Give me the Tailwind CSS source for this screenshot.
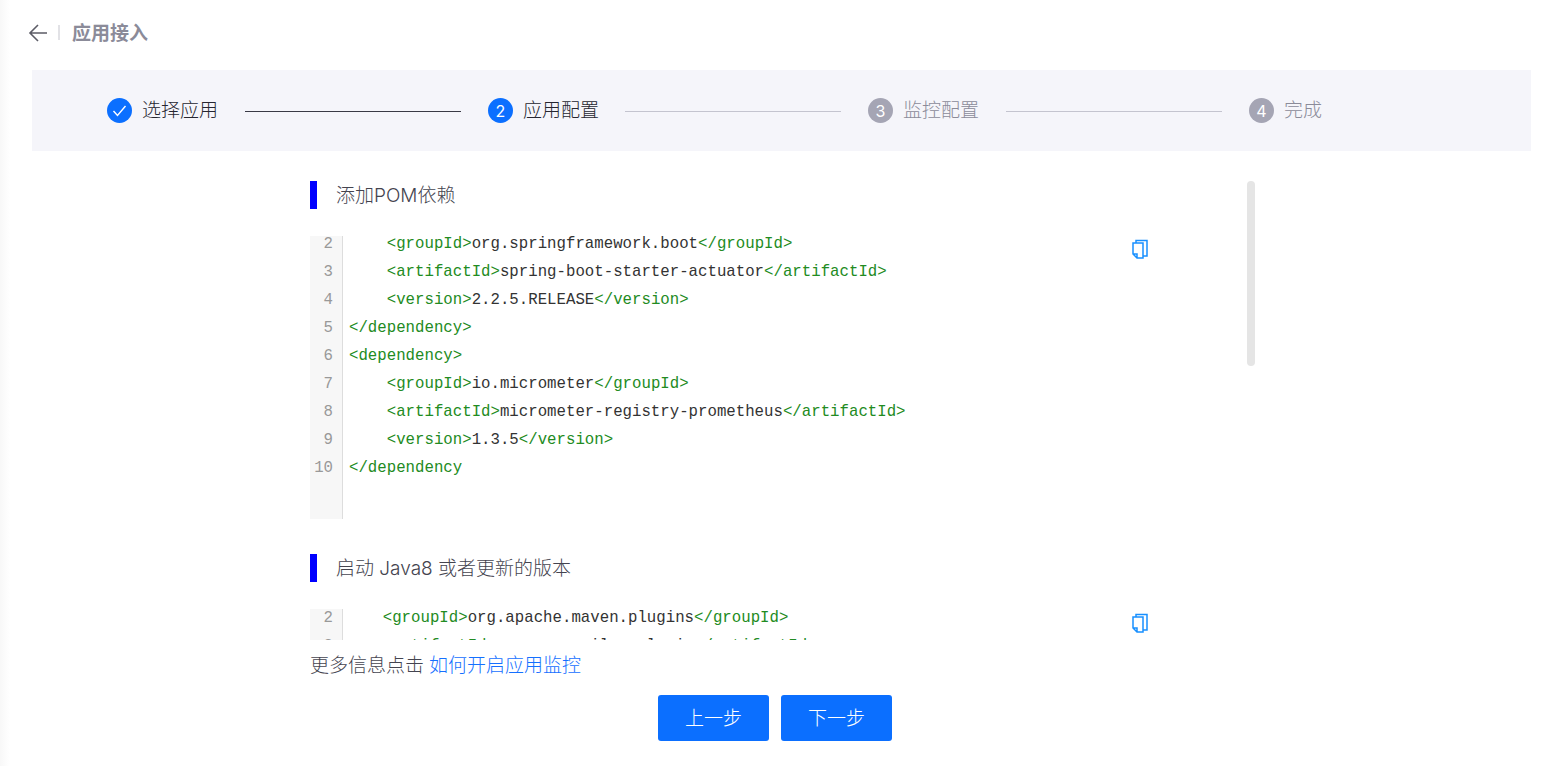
<!doctype html>
<html lang="zh">
<head>
  <meta charset="utf-8">
  <title>应用接入</title>
  <script src="https://cdn.jsdelivr.net/npm/@tailwindcss/browser@4"></script>
</head>
<body class="bg-white overflow-hidden">
<div class="relative w-[1558px] h-[766px] overflow-hidden font-['Inter','Noto_Sans_CJK_SC',sans-serif] text-[19px] text-[#44444f]">
  <div class="absolute left-0 top-0 h-full w-[10px] bg-linear-to-r from-[#f8f8f8] to-white"></div>

  <!-- header -->
  <div class="h-[70px] pl-[28px] pb-[5px] flex items-center">
    <svg class="w-[20px] h-[20px]" viewBox="0 0 20 20" fill="none" stroke="#5c5c66" stroke-width="1.6">
      <path d="M19 10H2M10 2L2 10l8 8"/>
    </svg>
    <div class="ml-[10px] w-[2px] h-[15px] bg-[#e2e2e6]"></div>
    <div class="ml-[12px] mt-[2px] font-bold text-[#8b8b99] leading-none">应用接入</div>
  </div>

  <!-- steps -->
  <div class="ml-[32px] w-[1499px] h-[81px] bg-[#f5f5fa] pl-[75px] flex items-center">
    <div class="w-[25px] h-[25px] rounded-full bg-[#0b6fff] flex items-center justify-center">
      <svg class="w-[15px] h-[15px]" viewBox="0 0 15 15" fill="none" stroke="#fff" stroke-width="1.4"><path d="M1.5 8l4 4.5L13.5 3"/></svg>
    </div>
    <span class="ml-[10px] w-[76px] pt-[2px] text-[#262630] whitespace-nowrap font-light">选择应用</span>
    <div class="ml-[27px] mr-[27px] mt-px w-[216px] h-px bg-[#3a3a45]"></div>
    <div class="w-[25px] h-[25px] rounded-full bg-[#0b6fff] text-white text-[16px] flex items-center justify-center">2</div>
    <span class="ml-[10px] w-[76px] pt-[2px] text-[#262630] whitespace-nowrap font-light">应用配置</span>
    <div class="ml-[26px] mr-[27px] mt-px w-[216px] h-px bg-[#c4c4cf]"></div>
    <div class="w-[25px] h-[25px] rounded-full bg-[#a5a5b4] text-white text-[16px] flex items-center justify-center">3</div>
    <span class="ml-[10px] w-[76px] pt-[2px] text-[#8b8b99] whitespace-nowrap font-light">监控配置</span>
    <div class="ml-[27px] mr-[27px] mt-px w-[216px] h-px bg-[#c4c4cf]"></div>
    <div class="w-[25px] h-[25px] rounded-full bg-[#a5a5b4] text-white text-[16px] flex items-center justify-center">4</div>
    <span class="ml-[10px] pt-[2px] text-[#8b8b99] whitespace-nowrap font-light">完成</span>
  </div>

  <!-- scroll area -->
  <div class="relative ml-[310px] w-[945px] h-[489px] overflow-hidden pt-[30px]">
    <div class="absolute right-0 top-[30px] w-[8px] h-[185px] rounded-full bg-[#e5e5e5]"></div>

    <div class="h-[28px] flex items-center">
      <div class="w-[7px] h-[28px] bg-[#0000ff]"></div>
      <span class="ml-[19px] pt-[2px] font-light">添加POM依赖</span>
    </div>

    <div class="relative mt-[27px] w-[840px] h-[283px] overflow-hidden flex font-['Liberation_Mono',monospace] text-[15.73px] leading-[28px]">
      <div class="w-[33px] bg-[#f7f7f7] border-r border-[#dddddd] rounded-tl-[6px] text-[#999999] text-right pr-[9px] -mt-[6px] h-[289px] shrink-0">
        <div>2</div><div>3</div><div>4</div><div>5</div><div>6</div><div>7</div><div>8</div><div>9</div><div>10</div>
      </div>
      <div class="pl-[6px] -mt-[6px] text-[#333333]">
        <div class="whitespace-pre">    <span class="text-[#228b22]">&lt;groupId&gt;</span>org.springframework.boot<span class="text-[#228b22]">&lt;/groupId&gt;</span></div>
        <div class="whitespace-pre">    <span class="text-[#228b22]">&lt;artifactId&gt;</span>spring-boot-starter-actuator<span class="text-[#228b22]">&lt;/artifactId&gt;</span></div>
        <div class="whitespace-pre">    <span class="text-[#228b22]">&lt;version&gt;</span>2.2.5.RELEASE<span class="text-[#228b22]">&lt;/version&gt;</span></div>
        <div class="whitespace-pre"><span class="text-[#228b22]">&lt;/dependency&gt;</span></div>
        <div class="whitespace-pre"><span class="text-[#228b22]">&lt;dependency&gt;</span></div>
        <div class="whitespace-pre">    <span class="text-[#228b22]">&lt;groupId&gt;</span>io.micrometer<span class="text-[#228b22]">&lt;/groupId&gt;</span></div>
        <div class="whitespace-pre">    <span class="text-[#228b22]">&lt;artifactId&gt;</span>micrometer-registry-prometheus<span class="text-[#228b22]">&lt;/artifactId&gt;</span></div>
        <div class="whitespace-pre">    <span class="text-[#228b22]">&lt;version&gt;</span>1.3.5<span class="text-[#228b22]">&lt;/version&gt;</span></div>
        <div class="whitespace-pre"><span class="text-[#228b22]">&lt;/dependency</span></div>
      </div>
      <svg class="absolute left-[822px] top-[3px] w-[16px] h-[20px]" viewBox="0 0 16 20" fill="none" stroke="#1890ff" stroke-width="1.5">
        <path d="M1 4h10v15H5l-4-4zM1 15h4v4M4 4V1.5h11V17h-4"/>
      </svg>
    </div>

    <div class="mt-[35px] h-[28px] flex items-center">
      <div class="w-[7px] h-[28px] bg-[#0000ff]"></div>
      <span class="ml-[19px] pt-[2px] font-light">启动 Java8 或者更新的版本</span>
    </div>

    <div class="relative mt-[27px] w-[840px] h-[283px] overflow-hidden flex font-['Liberation_Mono',monospace] text-[15.73px] leading-[28px]">
      <div class="w-[33px] bg-[#f7f7f7] border-r border-[#dddddd] rounded-tl-[6px] text-[#999999] text-right pr-[9px] -mt-[5px] h-[290px] shrink-0">
        <div>2</div><div>3</div>
      </div>
      <div class="pl-[2px] -mt-[5px] text-[#333333]">
        <div class="whitespace-pre">    <span class="text-[#228b22]">&lt;groupId&gt;</span>org.apache.maven.plugins<span class="text-[#228b22]">&lt;/groupId&gt;</span></div>
        <div class="whitespace-pre">    <span class="text-[#228b22]">&lt;artifactId&gt;</span>maven-compiler-plugin<span class="text-[#228b22]">&lt;/artifactId&gt;</span></div>
      </div>
      <svg class="absolute left-[822px] top-[4px] w-[16px] h-[20px]" viewBox="0 0 16 20" fill="none" stroke="#1890ff" stroke-width="1.5">
        <path d="M1 4h10v15H5l-4-4zM1 15h4v4M4 4V1.5h11V17h-4"/>
      </svg>
    </div>
  </div>

  <!-- footer -->
  <div class="ml-[310px] h-[50px] pt-[2px] flex items-center font-light">
    <span>更多信息点击</span><a class="ml-[5px] text-[#1570ff]" href="#">如何开启应用监控</a>
  </div>
  <div class="mt-[5px] ml-[658px] flex gap-[12px]">
    <button class="w-[111px] h-[46px] pt-[2px] rounded-[3px] bg-[#0b6fff] text-white font-light">上一步</button>
    <button class="w-[111px] h-[46px] pt-[2px] rounded-[3px] bg-[#0b6fff] text-white font-light">下一步</button>
  </div>
</div>
</body>
</html>
